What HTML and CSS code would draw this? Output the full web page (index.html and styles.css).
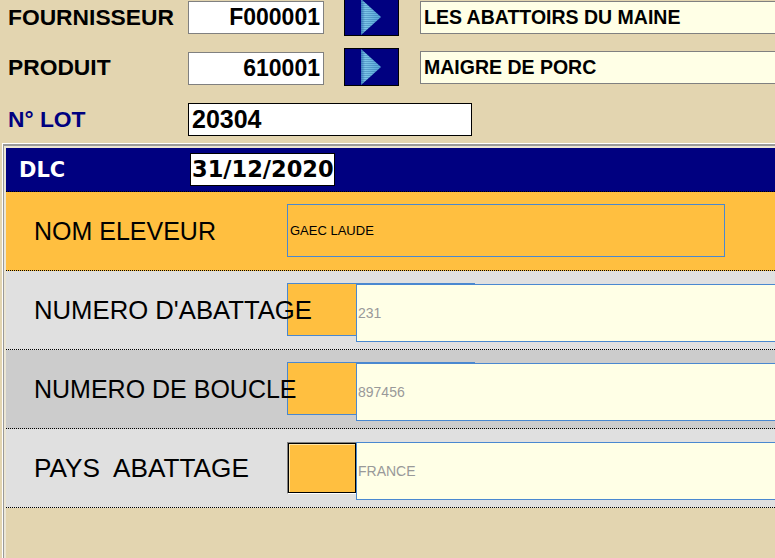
FILE: index.html
```html
<!DOCTYPE html>
<html lang="fr">
<head>
<meta charset="utf-8">
<title>Traçabilité lot</title>
<link rel="stylesheet" href="styles.css">
</head>
<body>
<div class="top">
  <div class="frow r1">
    <div class="lbl">FOURNISSEUR</div>
    <div class="code">F000001</div>
    <div class="btn"><svg width="53" height="36" viewBox="0 0 53 36"><defs><linearGradient id="g1" x1="0" x2="1" y1="0" y2="0"><stop offset="0" stop-color="#3f7fc0"/><stop offset=".2" stop-color="#7fc8e8"/><stop offset="1" stop-color="#56a4d6"/></linearGradient><pattern id="s1" width="4" height="2" patternUnits="userSpaceOnUse"><rect width="4" height="1" fill="#1c5c9c" opacity=".35"/></pattern></defs><polygon points="16,0 36,18 16,36" fill="url(#g1)"/><polygon points="16,0 36,18 16,36" fill="url(#s1)"/></svg></div>
    <div class="name">LES ABATTOIRS DU MAINE</div>
  </div>
  <div class="frow r2">
    <div class="lbl">PRODUIT</div>
    <div class="code">610001</div>
    <div class="btn"><svg width="53" height="36" viewBox="0 0 53 36"><defs><linearGradient id="g2" x1="0" x2="1" y1="0" y2="0"><stop offset="0" stop-color="#3f7fc0"/><stop offset=".2" stop-color="#7fc8e8"/><stop offset="1" stop-color="#56a4d6"/></linearGradient><pattern id="s2" width="4" height="2" patternUnits="userSpaceOnUse"><rect width="4" height="1" fill="#1c5c9c" opacity=".35"/></pattern></defs><polygon points="16,0 36,18 16,36" fill="url(#g2)"/><polygon points="16,0 36,18 16,36" fill="url(#s2)"/></svg></div>
    <div class="name">MAIGRE DE PORC</div>
  </div>
  <div class="frow r3">
    <div class="lbl navy">N° LOT</div>
    <div class="lot">20304</div>
  </div>
</div>

<div class="panel">
  <div class="panel-in">
    <div class="panel-body">
      <div class="hdr">
        <span class="dlc">DLC</span>
        <span class="date">31/12/2020</span>
      </div>
      <div class="row orange">
        <div class="rlbl">NOM ELEVEUR</div>
        <div class="eleveur">GAEC LAUDE</div>
      </div>
      <div class="row light">
        <div class="rlbl wide">NUMERO D'ABATTAGE</div>
        <div class="swatch lined"></div>
        <div class="val">231</div>
      </div>
      <div class="row dark">
        <div class="rlbl">NUMERO DE BOUCLE</div>
        <div class="swatch lined"></div>
        <div class="val">897456</div>
      </div>
      <div class="row light">
        <div class="rlbl widest">PAYS&nbsp; ABATTAGE</div>
        <div class="swatch sunken"></div>
        <div class="val">FRANCE</div>
      </div>
    </div>
  </div>
</div>
</body>
</html>
```

FILE: styles.css
```css
html, body {
  margin: 0;
  padding: 0;
}
body {
  background: #e3d5b0;
  font-family: "Liberation Sans", Arial, sans-serif;
  width: 775px;
  height: 558px;
  overflow: hidden;
  color: #000;
}

/* ---------- top form ---------- */
.top {
  padding-left: 8px;
}
.frow {
  display: flex;
  align-items: flex-start;
  height: 38px;
}
.r1 { margin-top: -2px; }
.r2 { margin-top: 12px; }
.r3 { margin-top: 17px; height: 33px; align-items: center; }

.lbl {
  width: 180px;
  flex: none;
  font-weight: bold;
  font-size: 22.8px;
  line-height: 38px;
  white-space: nowrap;
}
.r3 .lbl { line-height: 33px; }
.navy { color: #000080; }

.code {
  width: 136px;
  height: 33px;
  box-sizing: border-box;
  flex: none;
  margin-top: 3px;
  background: #fff;
  border: 1px solid #808080;
  text-align: right;
  padding-right: 3px;
  font-weight: bold;
  font-size: 23px;
  line-height: 31px;
}
.r2 .code { margin-top: 4px; }

.btn {
  width: 55px;
  height: 38px;
  box-sizing: border-box;
  flex: none;
  margin-left: 20px;
  background: #000080;
  border: 1px solid #000;
}
.btn svg { display: block; }

.name {
  width: 370px;
  height: 33px;
  box-sizing: border-box;
  flex: none;
  margin-left: 21px;
  margin-top: 3px;
  background: #ffffe6;
  border: 1px solid #808080;
  padding-left: 3px;
  font-weight: bold;
  font-size: 19.5px;
  line-height: 31px;
  white-space: nowrap;
}

.lot {
  width: 284px;
  height: 33px;
  box-sizing: border-box;
  background: #fff;
  border: 1px solid #000;
  padding-left: 3px;
  font-weight: bold;
  font-size: 25px;
  line-height: 31px;
}

/* ---------- panel ---------- */
.panel {
  margin-top: 7px;
  margin-left: 2px;
  border-top: 1px solid #fff;
  border-left: 1px solid #fff;
  height: 420px;
}
.panel-in {
  border-top: 2px solid #9a9a9a;
  border-left: 1px solid #9a9a9a;
  padding: 2px 0 0 2px;
  background: #ece6d4;
  height: 100%;
}
.panel-body {
  background: #e3d5b0;
  height: 100%;
}

.hdr {
  height: 43px;
  background: #000080;
  border-bottom: 1px dotted #000;
  display: flex;
  align-items: center;
}
.dlc {
  width: 184px;
  box-sizing: border-box;
  padding-left: 13px;
  color: #fff;
  font-family: "DejaVu Sans", Verdana, sans-serif;
  font-weight: bold;
  font-size: 21px;
  flex: none;
}
.date {
  width: 145px;
  height: 33px;
  box-sizing: border-box;
  background: #fff;
  border: 1px solid #000;
  padding-left: 1px;
  font-family: "DejaVu Sans", Verdana, sans-serif;
  font-weight: bold;
  font-size: 22.5px;
  line-height: 31px;
  white-space: nowrap;
  overflow: hidden;
}

.row {
  height: 78px;
  border-bottom: 1px dotted #000;
  display: flex;
  align-items: flex-start;
}
.orange { background: #ffbf40; }
.light { background: #e0e0e0; }
.dark { background: #cccccc; }

.rlbl {
  width: 281px;
  flex: none;
  box-sizing: border-box;
  padding-left: 28px;
  font-size: 25px;
  line-height: 78px;
  white-space: nowrap;
  position: relative;
  z-index: 1;
}
.rlbl.wide { font-size: 25.7px; }
.rlbl.widest { font-size: 26.2px; }

.eleveur {
  margin-top: 12px;
  width: 438px;
  height: 53px;
  box-sizing: border-box;
  border: 1px solid #4a88d0;
  padding-left: 2px;
  font-size: 13px;
  line-height: 51px;
}

.swatch {
  flex: none;
  width: 70px;
  box-sizing: border-box;
  background: #ffbf40;
}
.swatch.lined {
  margin-top: 12px;
  height: 53px;
  border: 1px solid #4a88d0;
  position: relative;
}
.swatch.lined::before {
  content: "";
  position: absolute;
  left: -1px;
  top: -1px;
  width: 188px;
  border-top: 1px solid #4a88d0;
}
.swatch.sunken {
  margin-top: 13px;
  height: 52px;
  border-top: 1px solid #808080;
  border-left: 1px solid #808080;
  border-bottom: 1px solid #fff;
  border-right: 1px solid #fff;
  box-shadow: inset 1px 1px 0 #000, inset -1px -1px 0 #000, inset 2px 2px 0 #ffe6a8;
}

.val {
  flex: none;
  margin-top: 13px;
  margin-left: -1px;
  width: 430px;
  height: 58px;
  box-sizing: border-box;
  background: #ffffe6;
  border: 1px solid #4a88d0;
  padding-left: 1px;
  color: #999;
  font-size: 14px;
  line-height: 56px;
}
```
